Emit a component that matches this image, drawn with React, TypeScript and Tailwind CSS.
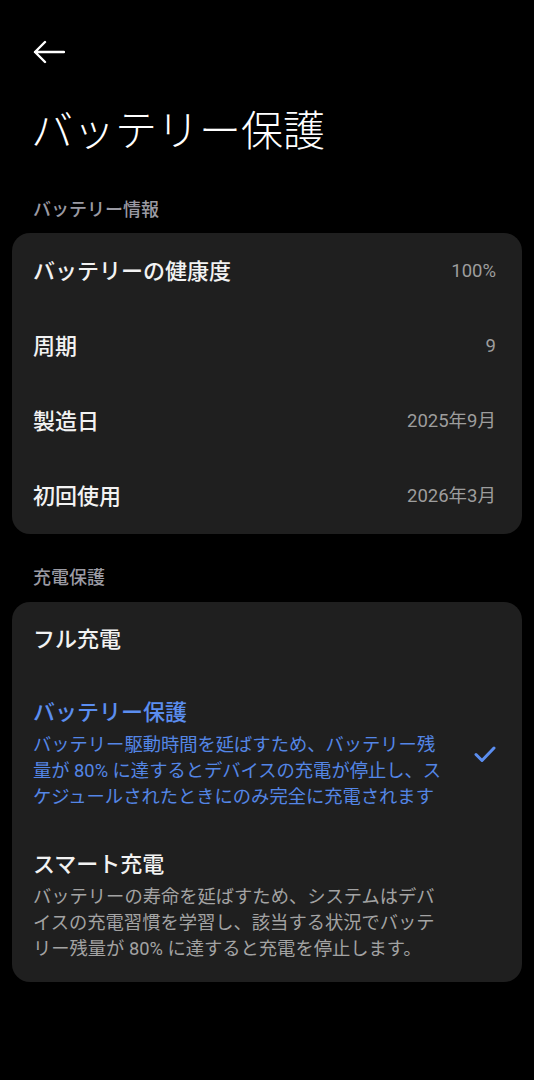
import React from 'react';

const font = { fontFamily: 'Roboto, "Noto Sans CJK JP", sans-serif' };

function InfoRow({ label, value }: { label: string; value: string }) {
  return (
    <div className="h-[75px] flex items-center justify-between pl-[21px] pr-[26px]">
      <span className="text-[22px] text-[#f2f2f2] font-medium">{label}</span>
      <span className="text-[18.5px] text-[#9d9d9d]">{value}</span>
    </div>
  );
}

export default function App() {
  return (
    <div className="w-[534px] min-h-[1080px] bg-black text-white" style={font}>
      <div className="pt-[40px] pl-[33px] h-[64px]">
        <svg width="32" height="24" viewBox="0 0 32 24" fill="none">
          <path d="M31 12H2M12 2L2 12l10 10" stroke="#ffffff" strokeWidth="2.4" strokeLinecap="round" strokeLinejoin="round" />
        </svg>
      </div>

      <h1 className="pl-[31px] mt-[42px] text-[42px] leading-[52px] font-light">
        バッテリー保護
      </h1>

      <div className="pl-[33px] mt-[40px] text-[18px] leading-[24px] text-[#9a9aa3] font-medium">
        バッテリー情報
      </div>

      <div className="mx-[12px] mt-[11px] rounded-[18px] bg-[#1f1f1f] pt-[1px]">
        <InfoRow label="バッテリーの健康度" value="100%" />
        <InfoRow label="周期" value="9" />
        <InfoRow label="製造日" value="2025年9月" />
        <InfoRow label="初回使用" value="2026年3月" />
      </div>

      <div className="pl-[33px] mt-[32px] text-[18px] leading-[24px] text-[#9a9aa3] font-medium">
        充電保護
      </div>

      <div className="mx-[12px] mt-[12px] rounded-[18px] bg-[#1f1f1f] pb-[20px]">
        <div className="pl-[21px] pt-[23px] pb-[22px]">
          <div className="text-[22px] leading-[30px] text-[#f2f2f2] font-medium">フル充電</div>
        </div>

        <div className="pl-[21px] pr-[26px] pt-[21px] pb-[19px] flex items-center justify-between">
          <div>
            <div className="text-[22px] leading-[30px] mb-[4px] text-[#5b8ef0] font-medium">バッテリー保護</div>
            <div className="text-[18.3px] leading-[26px] text-[#5486e6] whitespace-nowrap">
              バッテリー駆動時間を延ばすため、バッテリー残<br />
              量が 80% に達するとデバイスの充電が停止し、ス<br />
              ケジュールされたときにのみ完全に充電されます
            </div>
          </div>
          <svg width="22" height="18" viewBox="0 0 22 18" fill="none">
            <path d="M2 9.5l6 6L20 3" stroke="#5b8ef0" strokeWidth="3" strokeLinecap="round" strokeLinejoin="round" />
          </svg>
        </div>

        <div className="pl-[21px] pt-[21px]">
          <div className="text-[22px] leading-[30px] mb-[4px] text-[#f2f2f2] font-medium">スマート充電</div>
          <div className="text-[18.3px] leading-[26px] text-[#a3a3a3] whitespace-nowrap">
            バッテリーの寿命を延ばすため、システムはデバ<br />
            イスの充電習慣を学習し、該当する状況でバッテ<br />
            リー残量が 80% に達すると充電を停止します。
          </div>
        </div>
      </div>
    </div>
  );
}
